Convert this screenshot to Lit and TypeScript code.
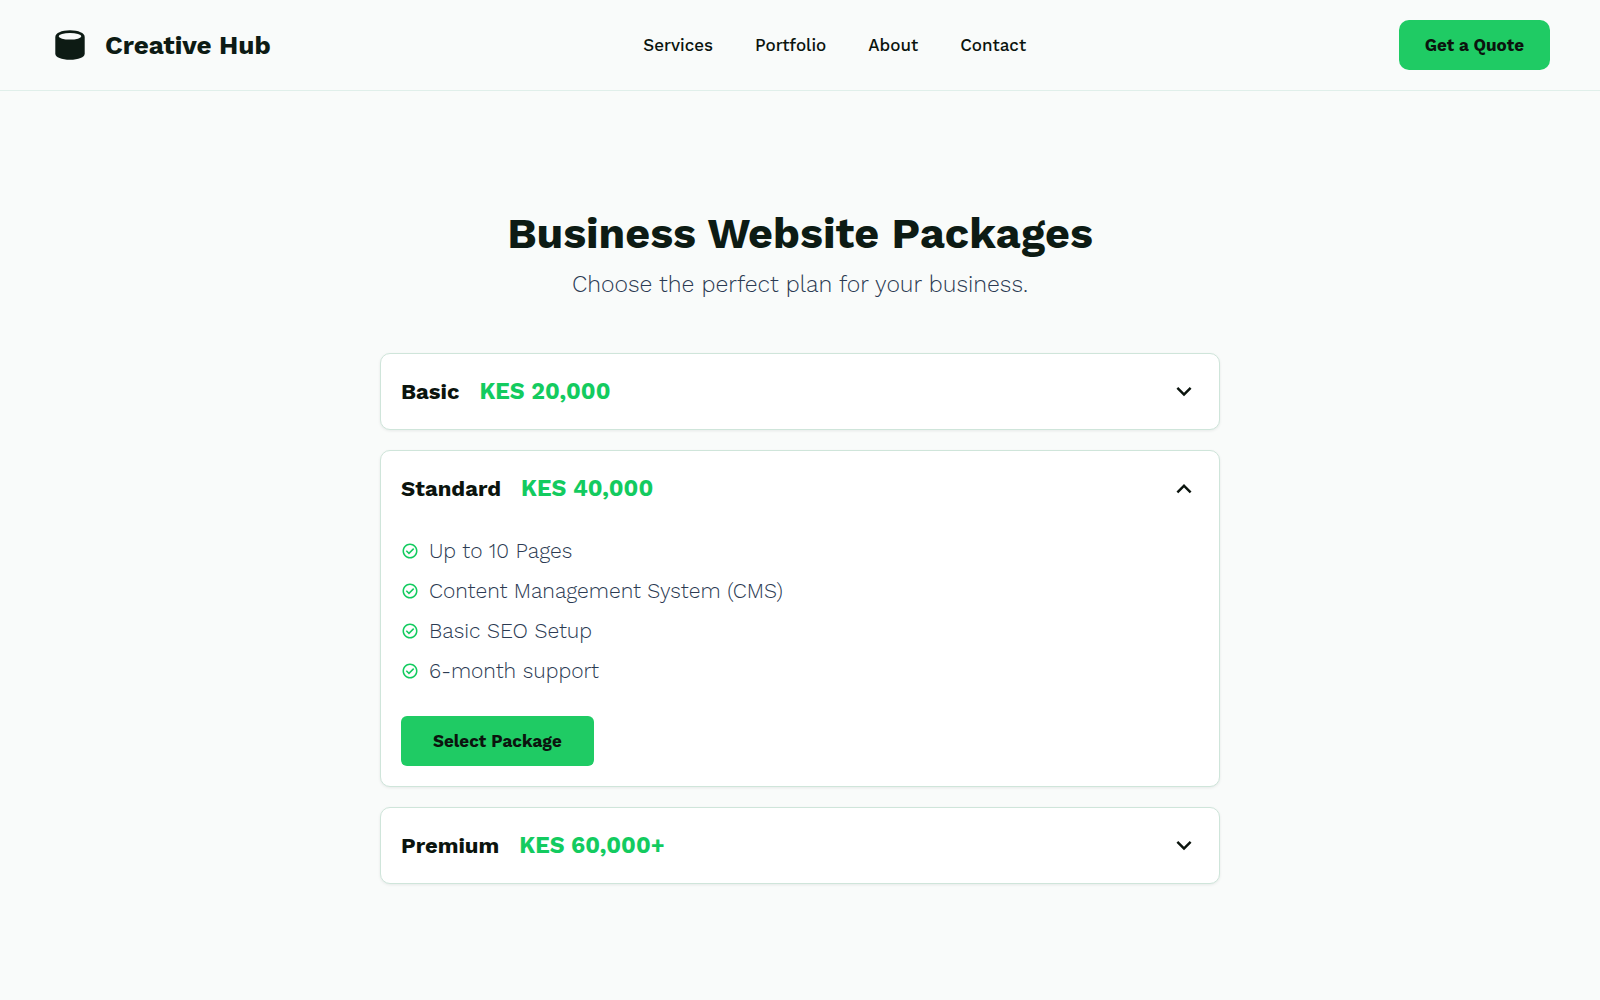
import { LitElement, html, css, nothing } from "lit";
import { customElement, property, state } from "lit/decorators.js";

interface Package {
  id: string;
  name: string;
  price: string;
  features: string[];
}

const NAV_LINKS = ["Services", "Portfolio", "About", "Contact"];

const CHEVRON_DOWN = "M480-344 240-584l56-56 184 184 184-184 56 56-240 240Z";
const CHEVRON_UP = "m296-345-56-56 240-240 240 240-56 56-184-184-184 184Z";

const PACKAGES: Package[] = [
  {
    id: "basic",
    name: "Basic",
    price: "KES 20,000",
    features: [],
  },
  {
    id: "standard",
    name: "Standard",
    price: "KES 40,000",
    features: [
      "Up to 10 Pages",
      "Content Management System (CMS)",
      "Basic SEO Setup",
      "6-month support",
    ],
  },
  {
    id: "premium",
    name: "Premium",
    price: "KES 60,000+",
    features: [],
  },
];

@customElement("site-header")
export class SiteHeader extends LitElement {
  static styles = css`
    :host {
      display: block;
    }
    .bar {
      display: flex;
      flex-wrap: wrap;
      align-items: center;
      justify-content: space-between;
      gap: 20px;
      padding: 20px 50px;
      border-bottom: 1px solid #e0efea;
    }
    .brand {
      display: flex;
      align-items: center;
      gap: 15px;
      color: #0d1b14;
      font-size: 26px;
      font-weight: 700;
      line-height: 30px;
      text-decoration: none;
    }
    .logo {
      display: block;
      width: 40px;
      height: 40px;
    }
    .nav {
      display: flex;
      gap: 42px;
    }
    .link {
      color: #0b140e;
      font-size: 17px;
      font-weight: 500;
      line-height: 30px;
      text-decoration: none;
    }
    .quote {
      padding: 10px 26px;
      border: 0;
      border-radius: 10px;
      background: #1fcb64;
      color: #0b140e;
      font: inherit;
      font-size: 17px;
      font-weight: 700;
      line-height: 30px;
      cursor: pointer;
    }
  `;

  render() {
    return html`
      <header class="bar">
        <a class="brand" href="#home">
          <svg class="logo" viewBox="0 0 40 40" aria-hidden="true">
            <path
              fill="#0d1b14"
              d="M20 5.3C11.600 5.300 5.300 8.100 5.300 12v16.400C5.300 32.300 11.600 34.700 20 34.700S34.700 32.300 34.700 28.400V12C34.700 8.100 28.400 5.300 20 5.300Z"
            />
            <ellipse cx="20" cy="11.300" rx="11.300" ry="3.300" fill="#f9fbfa" />
          </svg>
          <span>Creative Hub</span>
        </a>
        <nav class="nav" aria-label="Main">
          ${NAV_LINKS.map(
            (label) => html`<a class="link" href="#${label.toLowerCase()}">${label}</a>`
          )}
        </nav>
        <button class="quote" type="button">Get a Quote</button>
      </header>
    `;
  }
}

@customElement("package-card")
export class PackageCard extends LitElement {
  @property({ attribute: false }) pkg!: Package;
  @property({ type: Boolean }) open = false;

  static styles = css`
    :host {
      display: block;
    }
    .card {
      border: 1px solid #cfe5da;
      border-radius: 10px;
      background: #ffffff;
      box-shadow: 0 1px 3px rgba(13, 27, 20, 0.08);
    }
    .heading {
      margin: 0;
      font-size: 22px;
      font-weight: 700;
    }
    .toggle {
      display: flex;
      align-items: center;
      gap: 20px;
      width: 100%;
      padding: 20px;
      border: 0;
      background: none;
      color: #0b140e;
      font: inherit;
      line-height: 35px;
      text-align: left;
      cursor: pointer;
    }
    .price {
      color: #13cb5f;
      font-size: 23px;
    }
    .chevron {
      width: 30px;
      height: 30px;
      margin-left: auto;
      fill: currentColor;
    }
    .panel {
      padding: 10px 20px 20px;
    }
    .features {
      display: flex;
      flex-direction: column;
      gap: 10px;
      margin: 0 0 30px;
      padding: 0;
      list-style: none;
    }
    .feature {
      display: flex;
      align-items: center;
      gap: 10px;
      color: #2b3a52;
      font-size: 21px;
      font-weight: 300;
      line-height: 30px;
    }
    .check {
      flex: none;
      width: 18px;
      height: 18px;
      fill: #13cb5f;
    }
    .select {
      display: block;
      padding: 10px 32px;
      border: 0;
      border-radius: 6px;
      background: #1fcb64;
      color: #0b140e;
      font: inherit;
      font-size: 17px;
      font-weight: 700;
      line-height: 30px;
      cursor: pointer;
    }
  `;

  private toggle() {
    this.dispatchEvent(new CustomEvent("toggle-package", { detail: this.pkg.id }));
  }

  render() {
    const { name, price, features } = this.pkg;
    return html`
      <section class="card">
        <h2 class="heading">
          <button
            class="toggle"
            type="button"
            aria-expanded=${this.open ? "true" : "false"}
            @click=${this.toggle}
          >
            <span>${name}</span>
            <span class="price">${price}</span>
            <svg class="chevron" viewBox="0 -960 960 960" aria-hidden="true">
              <path d=${this.open ? CHEVRON_UP : CHEVRON_DOWN} />
            </svg>
          </button>
        </h2>
        ${this.open
          ? html`<div class="panel">
              <ul class="features">
                ${features.map(
                  (feature) => html`<li class="feature">
                    <svg class="check" viewBox="0 -960 960 960" aria-hidden="true">
                      <path
                        d="m424-296 282-282-56-56-226 226-114-114-56 56 170 170Zm56 216q-83 0-156-31.500T197-197q-54-54-85.500-127T80-480q0-83 31.500-156T197-763q54-54 127-85.500T480-880q83 0 156 31.500T763-763q54 54 85.500 127T880-480q0 83-31.500 156T763-197q-54 54-127 85.500T480-80Zm0-80q134 0 227-93t93-227q0-134-93-227t-227-93q-134 0-227 93t-93 227q0 134 93 227t227 93Z"
                      />
                    </svg>
                    <span>${feature}</span>
                  </li>`
                )}
              </ul>
              <button class="select" type="button">Select Package</button>
            </div>`
          : nothing}
      </section>
    `;
  }
}

@customElement("app-root")
export class AppRoot extends LitElement {
  @state() private openId = "standard";

  static styles = css`
    :host {
      display: block;
      min-height: 100vh;
      background: #f9fbfa;
      color: #0d1b14;
      font-family: "Work Sans", Inter, "Liberation Sans", sans-serif;
    }
    .main {
      box-sizing: border-box;
      max-width: 880px;
      margin: 0 auto;
      padding: 112px 20px;
    }
    .title {
      margin: 0 0 7px;
      font-size: 43px;
      font-weight: 700;
      line-height: 60px;
      text-align: center;
    }
    .subtitle {
      margin: 0 0 53px;
      color: #2b3a52;
      font-size: 23px;
      font-weight: 300;
      line-height: 30px;
      text-align: center;
    }
    .packages {
      display: flex;
      flex-direction: column;
      gap: 20px;
    }
  `;

  private onToggle(event: CustomEvent<string>) {
    this.openId = this.openId === event.detail ? "" : event.detail;
  }

  render() {
    return html`
      <site-header></site-header>
      <main class="main">
        <h1 class="title">Business Website Packages</h1>
        <p class="subtitle">Choose the perfect plan for your business.</p>
        <div class="packages">
          ${PACKAGES.map(
            (pkg) => html`<package-card
              .pkg=${pkg}
              ?open=${pkg.id === this.openId}
              @toggle-package=${this.onToggle}
            ></package-card>`
          )}
        </div>
      </main>
    `;
  }
}
